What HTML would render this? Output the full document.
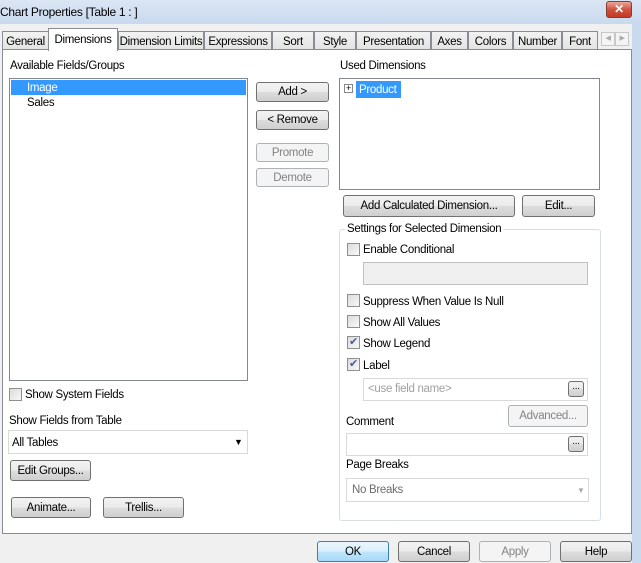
<!DOCTYPE html>
<html><head><style>
*{box-sizing:border-box;margin:0;padding:0}
body{width:641px;height:563px;overflow:hidden;position:relative;background:#f0f0f0;font-family:"Liberation Sans",sans-serif;font-size:11.5px;color:#000;letter-spacing:-0.3px}
.a{position:absolute;white-space:nowrap}
.btn{position:absolute;border:1px solid #707070;border-radius:3px;background:linear-gradient(#f2f2f2,#ebebeb 50%,#dddddd 51%,#cfcfcf);text-align:center;line-height:19px}
.dis{border-color:#adb2b5;background:#f4f4f4;color:#838383}
.tab{position:absolute;top:31px;height:19px;border:1px solid #898c95;border-bottom:none;background:linear-gradient(#f2f2f2,#e3e3e3);text-align:center;line-height:20px}
.cb{position:absolute;width:13px;height:13px;border:1px solid #8e8f8f;background:linear-gradient(135deg,#dcdcdc,#f8f8f8)}
.box{position:absolute;border:1px solid #abadb3;background:#fff}
</style></head><body>
<div class="a" style="left:0;top:0;width:641px;height:24px;background:linear-gradient(#dbe6f4,#c9d9ee)"></div>
<div class="a" style="left:632px;top:24px;width:9px;height:539px;background:#c9d9ee"></div>
<div class="a" style="left:0;top:5px;font-size:12px">Chart Properties [Table 1 : ]</div>
<div class="a" style="left:606px;top:1px;width:26px;height:17px;border:1px solid #8b3a2e;border-radius:3px;background:linear-gradient(#e9a99a,#d0533e 50%,#c13a25);color:#fff;font-weight:bold;text-align:center;line-height:15px;font-size:12px">✕</div>
<div class="a" style="left:0;top:24px;width:632px;height:539px;background:#f0f0f0"></div>
<div class="tab" style="left:2px;width:47px">General</div>
<div class="tab" style="left:118px;width:86px">Dimension Limits</div>
<div class="tab" style="left:204px;width:68px">Expressions</div>
<div class="tab" style="left:272px;width:42px">Sort</div>
<div class="tab" style="left:314px;width:42px">Style</div>
<div class="tab" style="left:356px;width:75px">Presentation</div>
<div class="tab" style="left:431px;width:37px">Axes</div>
<div class="tab" style="left:468px;width:45px">Colors</div>
<div class="tab" style="left:513px;width:49px">Number</div>
<div class="tab" style="left:562px;width:36px">Font</div>
<div class="a" style="left:601px;top:32px;width:14px;height:14px;border:1px solid #c8c8c8;background:#f4f4f4;color:#aaa;font-size:7px;text-align:center;line-height:12px">◀</div>
<div class="a" style="left:615px;top:32px;width:14px;height:14px;border:1px solid #c8c8c8;background:#f4f4f4;color:#aaa;font-size:7px;text-align:center;line-height:12px">▶</div>
<div class="a" style="left:2px;top:49px;width:630px;height:485px;background:#fff;border:1px solid #898c95"></div>
<div class="a" style="left:48px;top:28px;width:70px;height:23px;background:#fff;border:1px solid #898c95;border-bottom:none;text-align:center;line-height:22px">Dimensions</div>

<div class="a" style="left:10px;top:60px">Available Fields/Groups</div>
<div class="box" style="left:9px;top:78px;width:239px;height:303px;border-color:#828790"></div>
<div class="a" style="left:11px;top:80px;width:235px;height:15px;background:#3399ff;color:#fff;padding-left:16px;line-height:16px">Image</div>
<div class="a" style="left:27px;top:97px">Sales</div>

<div class="btn" style="left:256px;top:82px;width:73px;height:20px">Add &gt;</div>
<div class="btn" style="left:256px;top:110px;width:73px;height:20px">&lt; Remove</div>
<div class="btn dis" style="left:256px;top:143px;width:73px;height:19px">Promote</div>
<div class="btn dis" style="left:256px;top:168px;width:73px;height:19px">Demote</div>

<div class="a" style="left:340px;top:60px">Used Dimensions</div>
<div class="box" style="left:339px;top:78px;width:261px;height:112px;border-color:#828790"></div>
<div class="a" style="left:344px;top:84px;width:9px;height:9px;border:1px solid #888;background:#fff;font-size:9px;line-height:7px;text-align:center">+</div>
<div class="a" style="left:356px;top:81px;width:45px;height:17px;background:#3399ff;color:#fff;padding-left:3px;line-height:18px">Product</div>

<div class="btn" style="left:343px;top:195px;width:172px;height:22px;line-height:21px">Add Calculated Dimension...</div>
<div class="btn" style="left:522px;top:195px;width:73px;height:22px;line-height:21px">Edit...</div>

<div class="a" style="left:339px;top:229px;width:262px;height:292px;border:1px solid #d5dfe5;border-radius:3px"></div>
<div class="a" style="left:345px;top:223px;background:#fff;padding:0 2px">Settings for Selected Dimension</div>
<div class="cb" style="left:347px;top:243px"></div><div class="a" style="left:363px;top:244px">Enable Conditional</div>
<div class="a" style="left:363px;top:262px;width:225px;height:23px;border:1px solid #c0c0c0;background:#f0f0f0"></div>
<div class="cb" style="left:347px;top:294px"></div><div class="a" style="left:363px;top:296px">Suppress When Value Is Null</div>
<div class="cb" style="left:347px;top:315px"></div><div class="a" style="left:363px;top:317px">Show All Values</div>
<div class="cb" style="left:347px;top:336px;color:#4a5f97;font-size:11px;line-height:11px;text-align:center">✔</div><div class="a" style="left:363px;top:338px">Show Legend</div>
<div class="cb" style="left:347px;top:358px;color:#4a5f97;font-size:11px;line-height:11px;text-align:center">✔</div><div class="a" style="left:363px;top:360px">Label</div>
<div class="box" style="left:363px;top:378px;width:225px;height:23px;border-color:#d9d9d9;color:#a0a0a0;padding:4px 4px">&lt;use field name&gt;</div>
<div class="btn" style="left:568px;top:381px;width:16px;height:16px;line-height:10px;font-size:10px">...</div>
<div class="btn dis" style="left:508px;top:405px;width:80px;height:22px;line-height:21px">Advanced...</div>
<div class="a" style="left:346px;top:416px">Comment</div>
<div class="box" style="left:346px;top:433px;width:242px;height:23px;border-color:#d9d9d9"></div>
<div class="btn" style="left:568px;top:436px;width:16px;height:16px;line-height:10px;font-size:10px">...</div>
<div class="a" style="left:346px;top:459px">Page Breaks</div>
<div class="box" style="left:346px;top:478px;width:243px;height:24px;border-color:#d9d9d9;color:#6d6d6d;padding:5px 5px">No Breaks</div>
<div class="a" style="left:577px;top:486px;font-size:8px;color:#aaa">▼</div>

<div class="cb" style="left:9px;top:388px"></div><div class="a" style="left:25px;top:389px">Show System Fields</div>
<div class="a" style="left:9px;top:415px">Show Fields from Table</div>
<div class="box" style="left:8px;top:430px;width:240px;height:24px;border-color:#d9d9d9;padding:6px 3px">All Tables</div>
<div class="a" style="left:234px;top:437px;font-size:9px">▼</div>
<div class="btn" style="left:10px;top:460px;width:81px;height:21px;line-height:20px">Edit Groups...</div>
<div class="btn" style="left:11px;top:497px;width:80px;height:21px;line-height:20px">Animate...</div>
<div class="btn" style="left:103px;top:497px;width:81px;height:21px;line-height:20px">Trellis...</div>

<div class="btn" style="left:317px;top:541px;width:72px;height:21px;line-height:20px;border-color:#3c7fb1;background:linear-gradient(#eaf6fd,#d9f0fc 50%,#bee6fd 51%,#a7d9f5)">OK</div>
<div class="btn" style="left:398px;top:541px;width:72px;height:21px;line-height:20px">Cancel</div>
<div class="btn dis" style="left:479px;top:541px;width:72px;height:21px;line-height:20px">Apply</div>
<div class="btn" style="left:560px;top:541px;width:72px;height:21px;line-height:20px">Help</div>
</body></html>
